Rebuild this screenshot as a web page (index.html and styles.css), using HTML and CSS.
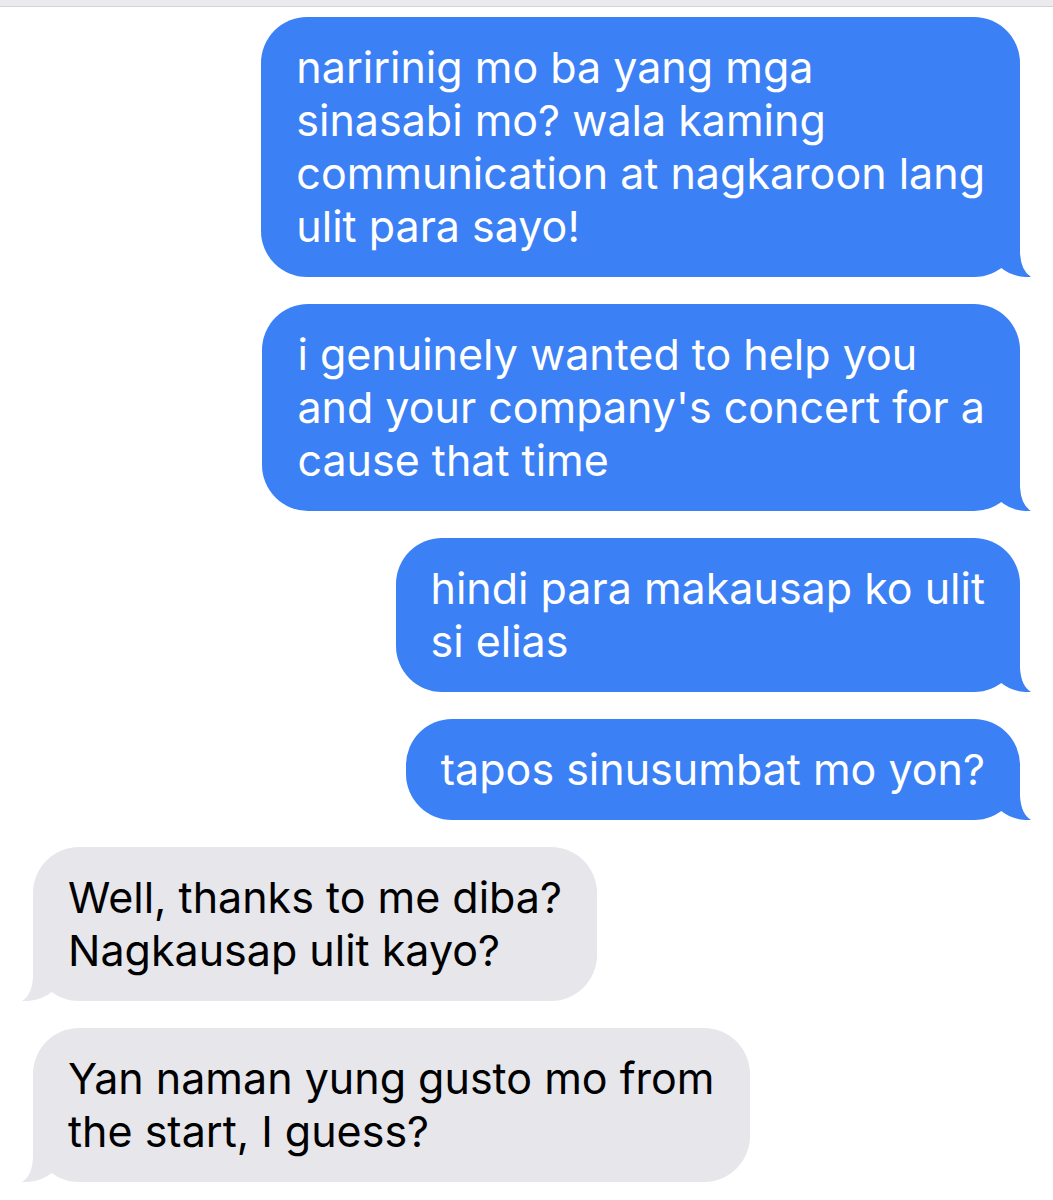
FILE: index.html
```html
<!DOCTYPE html>
<html lang="en">
<head>
  <meta charset="UTF-8" />
  <meta name="viewport" content="width=device-width, initial-scale=1" />
  <title>Messages</title>
  <link rel="stylesheet" href="styles.css">
</head>
<body>

  <div class="top-bar"></div>

  <div class="thread">
    <div class="bubble sent">
      naririnig mo ba yang mga<br>sinasabi mo? wala kaming<br>communication at nagkaroon lang<br>ulit para sayo!
      <svg class="tail" viewBox="0 0 40 46" width="40" height="46"><path d="M29 0 L29 22 Q30 40 40 46 Q22 47 9 36 L0 30 L0 0 Z" /></svg>
    </div>

    <div class="bubble sent">
      i genuinely wanted to help you<br>and your company's concert for a<br>cause that time
      <svg class="tail" viewBox="0 0 40 46" width="40" height="46"><path d="M29 0 L29 22 Q30 40 40 46 Q22 47 9 36 L0 30 L0 0 Z" /></svg>
    </div>

    <div class="bubble sent">
      hindi para makausap ko ulit<br>si elias
      <svg class="tail" viewBox="0 0 40 46" width="40" height="46"><path d="M29 0 L29 22 Q30 40 40 46 Q22 47 9 36 L0 30 L0 0 Z" /></svg>
    </div>

    <div class="bubble sent">
      tapos sinusumbat mo yon?
      <svg class="tail" viewBox="0 0 40 46" width="40" height="46"><path d="M29 0 L29 22 Q30 40 40 46 Q22 47 9 36 L0 30 L0 0 Z" /></svg>
    </div>

    <div class="bubble received">
      Well, thanks to me diba?<br>Nagkausap ulit kayo?
      <svg class="tail" viewBox="0 0 40 46" width="40" height="46"><path d="M29 0 L29 22 Q30 40 40 46 Q22 47 9 36 L0 30 L0 0 Z" /></svg>
    </div>

    <div class="bubble received">
      Yan naman yung gusto mo from<br>the start, I guess?
      <svg class="tail" viewBox="0 0 40 46" width="40" height="46"><path d="M29 0 L29 22 Q30 40 40 46 Q22 47 9 36 L0 30 L0 0 Z" /></svg>
    </div>
  </div>

</body>
</html>
```

FILE: styles.css
```css
body {
  margin: 0;
  background: #ffffff;
  font-family: 'Inter', 'Noto Sans', sans-serif;
}
.top-bar {
  height: 6px;
  background: #ebebed;
  border-bottom: 1px solid #d3d3d6;
}
.thread {
  display: flex;
  flex-direction: column;
  gap: 27px;
  padding: 10px 33px 20px;
}
.bubble {
  position: relative;
  width: fit-content;
  padding: 24px 35px;
  border-radius: 46px;
  font-size: 43px;
  line-height: 53px;
}
.sent {
  align-self: flex-end;
  background: #3b80f5;
  color: #ffffff;
}
.received {
  align-self: flex-start;
  background: #e6e6eb;
  color: #000000;
}
.tail {
  position: absolute;
  bottom: 0;
  display: block;
}
.sent .tail {
  right: -11px;
  fill: #3b80f5;
}
.received .tail {
  left: -11px;
  fill: #e6e6eb;
  transform: scaleX(-1);
}
```
